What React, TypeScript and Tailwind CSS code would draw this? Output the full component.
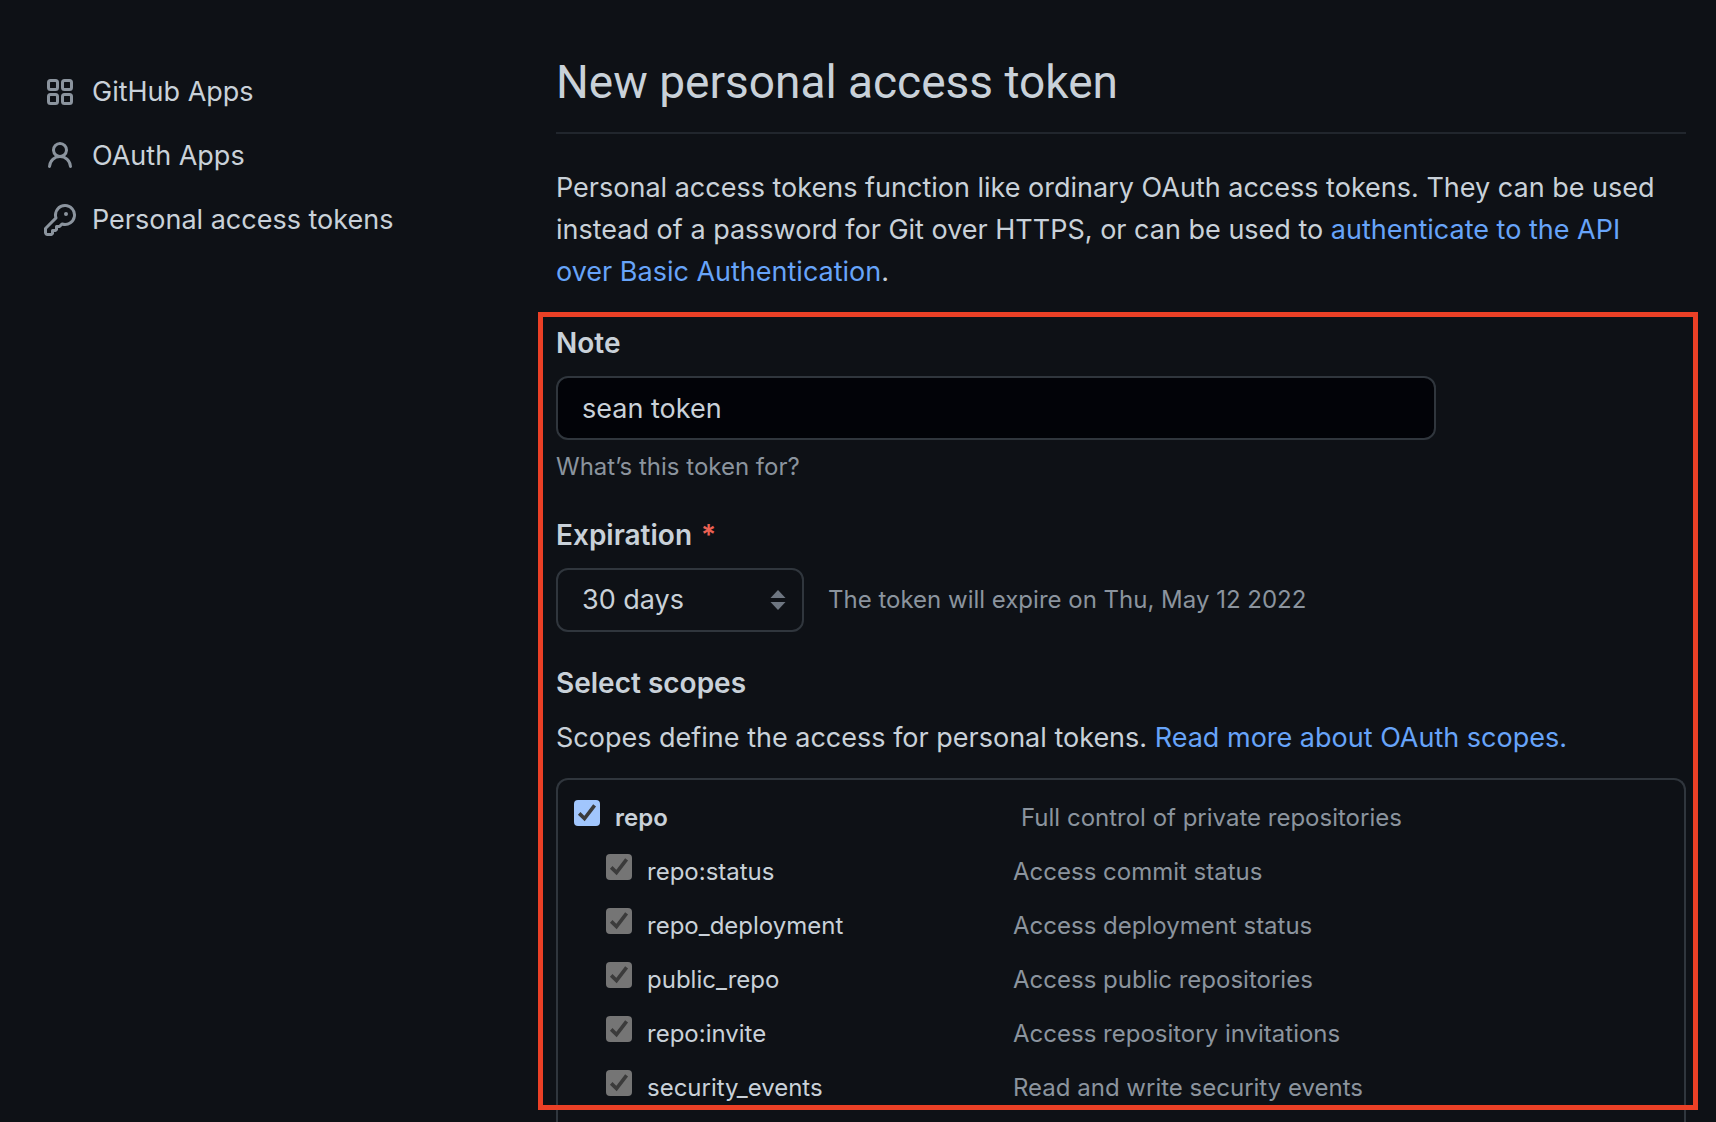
import { useState } from "react";
import type { ReactNode } from "react";

function AppsIcon() {
  return (
    <svg viewBox="0 0 16 16" className="size-8 shrink-0 fill-none stroke-[#8b949e]" strokeWidth={1.5} aria-hidden="true">
      <rect x="2.25" y="2.25" width="4.5" height="4.5" rx="1" />
      <rect x="9.25" y="2.25" width="4.5" height="4.5" rx="1" />
      <rect x="2.25" y="9.25" width="4.5" height="4.5" rx="1" />
      <rect x="9.25" y="9.25" width="4.5" height="4.5" rx="1" />
    </svg>
  );
}

function PersonIcon() {
  return (
    <svg viewBox="0 0 16 16" className="size-8 shrink-0 fill-[#8b949e]" aria-hidden="true">
      <path
        fillRule="evenodd"
        d="M10.5 5a2.5 2.5 0 11-5 0 2.5 2.5 0 015 0zm.061 3.073a4 4 0 10-5.123 0 6.004 6.004 0 00-3.431 5.142.75.75 0 001.498.07 4.5 4.5 0 018.99 0 .75.75 0 101.498-.07 6.005 6.005 0 00-3.432-5.142z"
      />
    </svg>
  );
}

function KeyIcon() {
  return (
    <svg viewBox="0 0 16 16" className="size-8 shrink-0 fill-[#8b949e]" aria-hidden="true">
      <path
        fillRule="evenodd"
        d="M6.5 5.5a4 4 0 112.731 3.795.75.75 0 00-.768.18L7.44 10.5H6.25a.75.75 0 00-.75.75v1.19l-.06.06H4.25a.75.75 0 00-.75.75v1.19l-.06.06H1.75a.25.25 0 01-.25-.25v-1.69l5.024-5.023a.75.75 0 00.181-.768A3.995 3.995 0 016.5 5.5zm4-5.5a5.5 5.5 0 00-5.348 6.788L.22 11.72a.75.75 0 00-.22.53v2C0 15.216.784 16 1.75 16h2a.75.75 0 00.53-.22l.5-.5a.75.75 0 00.22-.53V14h.75a.75.75 0 00.53-.22l.5-.5a.75.75 0 00.22-.53V12h.75a.75.75 0 00.53-.22l.932-.932A5.5 5.5 0 1010.5 0zm.5 6a1 1 0 100-2 1 1 0 000 2z"
      />
    </svg>
  );
}

function NavItem({ icon, children }: { icon: ReactNode; children: ReactNode }) {
  return (
    <li>
      <a href="#" className="flex h-16 items-center gap-4">
        {icon}
        {children}
      </a>
    </li>
  );
}

const childScopes = [
  { name: "repo:status", description: "Access commit status" },
  { name: "repo_deployment", description: "Access deployment status" },
  { name: "public_repo", description: "Access public repositories" },
  { name: "repo:invite", description: "Access repository invitations" },
  { name: "security_events", description: "Read and write security events" },
];

function Checkbox({
  id,
  checked,
  disabled,
  onChange,
}: {
  id: string;
  checked: boolean;
  disabled?: boolean;
  onChange?: (value: boolean) => void;
}) {
  return (
    <span className="grid size-[26px] shrink-0">
      <input
        id={id}
        type="checkbox"
        checked={checked}
        disabled={disabled}
        onChange={(event) => onChange?.(event.target.checked)}
        className="peer col-start-1 row-start-1 size-[26px] appearance-none rounded-[4px] border-2 border-[#767676] checked:border-0 checked:bg-[#a1c6fd] checked:disabled:bg-[#757575]"
      />
      <svg
        viewBox="0 0 26 26"
        className="pointer-events-none invisible col-start-1 row-start-1 size-[26px] fill-none stroke-[#3b3b3b] peer-checked:visible"
        strokeWidth={3.6}
        aria-hidden="true"
      >
        <path d="M5.2 13.4L10.5 18.6L20.6 5.4" />
      </svg>
    </span>
  );
}

export default function App() {
  const [note, setNote] = useState("sean token");
  const [repo, setRepo] = useState(true);

  return (
    <div className="flex min-h-screen bg-[#0e1116] pr-[30px] pl-11 font-['Inter',sans-serif] text-[27px] leading-[42px] text-[#c9d1d9]">
      <nav className="w-[512px] shrink-0 pt-[60px]" aria-label="Developer settings">
        <ul>
          <NavItem icon={<AppsIcon />}>GitHub Apps</NavItem>
          <NavItem icon={<PersonIcon />}>OAuth Apps</NavItem>
          <NavItem icon={<KeyIcon />}>Personal access tokens</NavItem>
        </ul>
      </nav>

      <main className="flex min-w-0 flex-1 flex-col pt-[46px]">
        <h1 className="border-b-2 border-[#21262d] pb-3.5 font-['Roboto',sans-serif] text-[46px] leading-[72px]">
          New personal access token
        </h1>
        <p className="mt-[33px] pr-3">
          Personal access tokens function like ordinary OAuth access tokens. They can be used instead of a password for
          Git over HTTPS, or can be used to{" "}
          <a href="#" className="text-[#67a4f9]">
            authenticate to the API over Basic Authentication
          </a>
          .
        </p>

        <form className="relative mt-[29px] flex flex-1 flex-col" onSubmit={(event) => event.preventDefault()}>
          <label htmlFor="note" className="text-[28px] font-semibold">
            Note
          </label>
          <input
            id="note"
            type="text"
            value={note}
            onChange={(event) => setNote(event.target.value)}
            className="mt-3 h-16 w-[880px] max-w-full rounded-xl border-2 border-[#30363d] bg-[#020308] px-6"
          />
          <p className="mt-[9px] text-[24px] leading-9 text-[#8b949e]">What’s this token for?</p>

          <label htmlFor="expiration" className="mt-[29px] text-[28px] font-semibold">
            Expiration <span className="ml-0.5 text-[#ea6153]">*</span>
          </label>
          <div className="mt-3 flex items-center gap-6">
            <div className="grid w-[248px] items-center">
              <select
                id="expiration"
                defaultValue="30"
                className="col-start-1 row-start-1 h-16 w-full appearance-none rounded-xl border-2 border-[#30363d] bg-transparent px-6"
              >
                <option value="30">30 days</option>
                <option value="60">60 days</option>
                <option value="90">90 days</option>
              </select>
              <svg
                viewBox="0 0 16 20"
                className="pointer-events-none col-start-1 row-start-1 mr-[18px] h-5 w-4 justify-self-end fill-[#6e7681]"
                aria-hidden="true"
              >
                <path d="M8 0L15.5 8H0.5zM8 20L15.5 12H0.5z" />
              </svg>
            </div>
            <span className="text-[24px] leading-9 text-[#8b949e]">The token will expire on Thu, May 12 2022</span>
          </div>

          <h2 className="mt-[30px] text-[28px] font-semibold">Select scopes</h2>
          <p className="mt-[13px]">
            Scopes define the access for personal tokens.{" "}
            <a href="#" className="text-[#67a4f9]">
              Read more about OAuth scopes.
            </a>
          </p>

          <ul className="mt-[19px] flex flex-1 flex-col gap-[18px] rounded-t-xl border-2 border-b-0 border-[#30363d] pt-5 pl-4 text-[24px] leading-9">
            <li className="flex items-start">
              <div className="flex w-[447px] shrink-0 gap-[15px]">
                <Checkbox id="repo" checked={repo} onChange={setRepo} />
                <label htmlFor="repo" className="font-semibold">
                  repo
                </label>
              </div>
              <span className="text-[#8b949e]">Full control of private repositories</span>
            </li>
            {childScopes.map((scope) => (
              <li key={scope.name} className="flex items-start pl-8">
                <div className="flex w-[407px] shrink-0 gap-[15px]">
                  <Checkbox id={scope.name} checked={repo} disabled />
                  <label htmlFor={scope.name}>{scope.name}</label>
                </div>
                <span className="text-[#8b949e]">{scope.description}</span>
              </li>
            ))}
          </ul>

          <div className="pointer-events-none absolute -top-2.5 -right-3 bottom-3 -left-[18px] border-5 border-[#eb4026]" />
        </form>
      </main>
    </div>
  );
}
